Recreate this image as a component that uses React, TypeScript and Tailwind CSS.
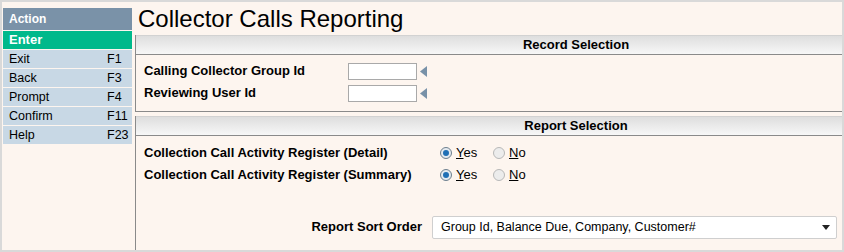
import { useState } from 'react';

const menu = [
  { label: 'Exit', key: 'F1' },
  { label: 'Back', key: 'F3' },
  { label: 'Prompt', key: 'F4' },
  { label: 'Confirm', key: 'F11' },
  { label: 'Help', key: 'F23' },
];

function Radio({ checked, onClick }: { checked: boolean; onClick: () => void }) {
  return (
    <span
      onClick={onClick}
      className={`inline-flex items-center justify-center w-[12px] h-[12px] rounded-full border ${
        checked ? 'border-[#6d7f8e] bg-[#e4eaf0]' : 'border-[#b8b8b8] bg-[#ececec]'
      }`}
    >
      {checked && <span className="w-[6px] h-[6px] rounded-full bg-[#1f6fb5]" />}
    </span>
  );
}

function YesNo() {
  const [yes, setYes] = useState(true);
  return (
    <div className="flex items-center text-[13px]">
      <label className="flex items-center gap-[4px] w-[53px]">
        <Radio checked={yes} onClick={() => setYes(true)} />
        <span><span className="underline">Y</span>es</span>
      </label>
      <label className="flex items-center gap-[4px]">
        <Radio checked={!yes} onClick={() => setYes(false)} />
        <span><span className="underline">N</span>o</span>
      </label>
    </div>
  );
}

function PanelHeader({ title }: { title: string }) {
  return (
    <div className="h-[20px] flex items-center justify-center pl-[174px] bg-gradient-to-b from-[#dedede] to-[#f7f7f7] border-t border-[#d2d2d2] border-b border-b-[#8a8a8a] text-[13px] font-bold">
      {title}
    </div>
  );
}

function PromptArrow() {
  return (
    <svg width="7" height="11" viewBox="0 0 7 11" className="ml-[3px]">
      <polygon points="7,0 7,11 0,5.5" fill="#7891a8" />
    </svg>
  );
}

export default function App() {
  return (
    <div
      className="w-[844px] h-[252px] bg-[#fdf5ef] border-2 border-[#d9d9d9] flex text-black overflow-hidden"
      style={{ fontFamily: '"Liberation Sans", Arial, sans-serif' }}
    >
      {/* action menu */}
      <div className="w-[130px] pl-[1px] pt-[6px] shrink-0">
        <div className="h-[22px] bg-[#7a92a8] text-white font-bold text-[12px] flex items-center px-[6px]">
          Action
        </div>
        <div className="mt-[1px] h-[18px] bg-[#00b98b] text-white font-bold text-[13px] flex items-center px-[6px]">
          Enter
        </div>
        {menu.map((m) => (
          <div
            key={m.label}
            className="mt-[1px] h-[18px] bg-[#c8d8e5] text-[12.5px] flex items-center pl-[6px]"
          >
            <span className="w-[98px]">{m.label}</span>
            <span>{m.key}</span>
          </div>
        ))}
      </div>

      {/* main */}
      <div className="flex-1 ml-[3px] flex flex-col">
        <h1 className="h-[33px] pl-[3px] pt-[4px] text-[24px] leading-[26px]">Collector Calls Reporting</h1>

        <div className="border-l border-[#8a8a8a] border-b border-b-[#8a8a8a]">
          <PanelHeader title="Record Selection" />
          <div className="h-[56px] pt-[5px] pl-[8px] text-[13px] font-bold">
            <div className="flex items-center h-[22px]">
              <span className="w-[204px]">Calling Collector Group Id</span>
              <input className="w-[69px] h-[17px] bg-white border border-[#a9a9a9] outline-none" />
              <PromptArrow />
            </div>
            <div className="flex items-center h-[22px]">
              <span className="w-[204px]">Reviewing User Id</span>
              <input className="w-[69px] h-[17px] bg-white border border-[#a9a9a9] outline-none" />
              <PromptArrow />
            </div>
          </div>
        </div>

        <div className="mt-[4px] flex-1 border-l border-[#8a8a8a]">
          <PanelHeader title="Report Selection" />
          <div className="pt-[6px] pl-[8px] text-[13px]">
            <div className="flex items-center h-[22px]">
              <span className="w-[296px] font-bold">Collection Call Activity Register (Detail)</span>
              <YesNo />
            </div>
            <div className="flex items-center h-[22px]">
              <span className="w-[296px] font-bold">Collection Call Activity Register (Summary)</span>
              <YesNo />
            </div>
            <div className="flex items-center h-[24px] mt-[29px]">
              <span className="w-[278px] text-right font-bold">Report Sort Order</span>
              <div className="ml-[10px] w-[405px] h-[23px] bg-white border border-[#cfcfcf] rounded-[2px] flex items-center justify-between pl-[8px] pr-[6px] text-[12.5px]">
                <span>Group Id, Balance Due, Company, Customer#</span>
                <svg width="8" height="5" viewBox="0 0 8 5">
                  <polygon points="0,0 8,0 4,5" fill="#222" />
                </svg>
              </div>
            </div>
          </div>
        </div>
      </div>
    </div>
  );
}
